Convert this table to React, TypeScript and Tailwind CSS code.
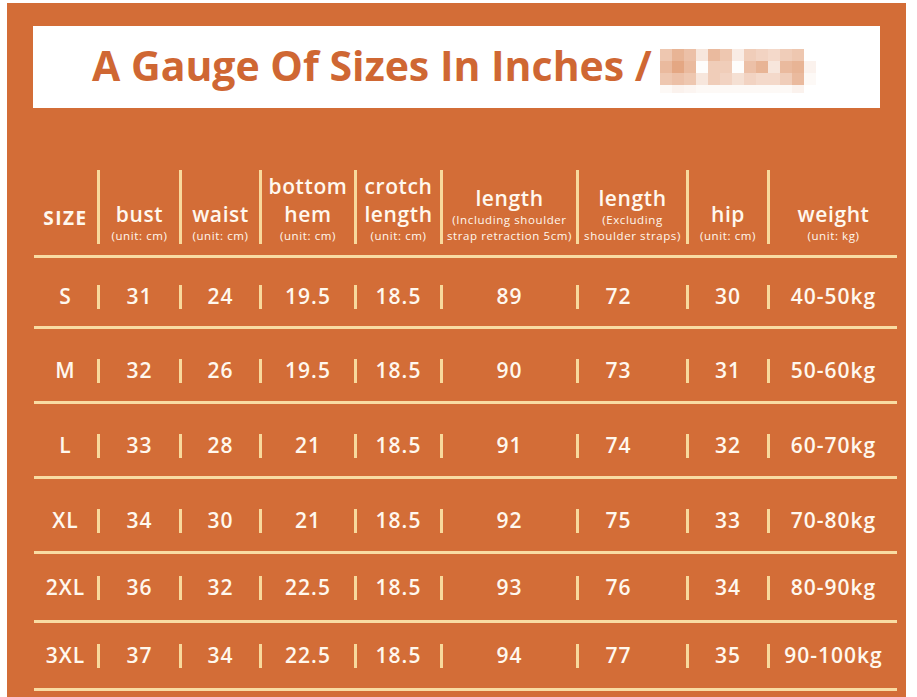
import React from 'react'

const cols = [
  { w: 'w-[63px]' },
  { w: 'w-[79px]' },
  { w: 'w-[77px]' },
  { w: 'w-[92px]' },
  { w: 'w-[83px]' },
  { w: 'w-[133px]' },
  { w: 'w-[107px]', data: 'pr-[28px]' },
  { w: 'w-[78px]' },
  { w: 'w-[127px]' },
]

const rows = [
  { cells: ['S', '31', '24', '19.5', '18.5', '89', '72', '30', '40-50kg'], h: 'h-[68px] pt-[10px]' },
  { cells: ['M', '32', '26', '19.5', '18.5', '90', '73', '31', '50-60kg'], h: 'h-[72px] pt-[12px]' },
  { cells: ['L', '33', '28', '21', '18.5', '91', '74', '32', '60-70kg'], h: 'h-[72px] pt-[12px]' },
  { cells: ['XL', '34', '30', '21', '18.5', '92', '75', '33', '70-80kg'], h: 'h-[72px] pt-[12px]' },
  { cells: ['2XL', '36', '32', '22.5', '18.5', '93', '76', '34', '80-90kg'], h: 'h-[66px] pt-[2px]' },
  { cells: ['3XL', '37', '34', '22.5', '18.5', '94', '77', '35', '90-100kg'], h: 'h-[65px]' },
]

// pixelated blur block after the title
const mosaic = [
  [0.45, 0.6, 0.5, 0.2, 0.55, 0.45, 0.15, 0.4, 0.35, 0.3, 0.4, 0.45, 0],
  [0.55, 0.7, 0.55, 0.02, 0.4, 0.4, 0.02, 0.5, 0.6, 0.2, 0.55, 0.6, 0.1],
  [0.45, 0.5, 0.45, 0.2, 0.4, 0.35, 0.25, 0.35, 0.3, 0.3, 0.4, 0.55, 0.05],
  [0.05, 0.1, 0.08, 0.05, 0.05, 0.05, 0.05, 0.05, 0.05, 0.05, 0.05, 0.1, 0],
]

function Divider({ tall }: { tall?: boolean }) {
  return <div className={`w-[3px] shrink-0 bg-[#f8d99c] ${tall ? 'self-stretch' : 'h-[24px]'}`} />
}

function Line() {
  return <div className="h-[3px] w-full bg-[#f9dca2]" />
}

function HeadCell({ w, main, sub }: { w: string; main: string[]; sub: string[] }) {
  return (
    <div className={`${w} shrink-0 flex flex-col items-center justify-end`}>
      {main.map((m) => (
        <div key={m} className="text-[21px] leading-[28px] font-semibold tracking-[0.6px]">{m}</div>
      ))}
      {sub.map((s) => (
        <div key={s} className="text-[11.5px] leading-[16px] tracking-[0.6px] whitespace-nowrap">{s}</div>
      ))}
    </div>
  )
}

export default function App() {
  return (
    <div className="w-[917px] h-[697px] bg-white pl-[7px] pt-[3px] overflow-hidden" style={{ fontFamily: '"Open Sans", "Noto Sans", sans-serif' }}>
      <div className="w-[899px] h-[694px] bg-[#d36d37] pt-[23px] text-[#fff8ee]">
        {/* Title */}
        <div className="ml-[26px] w-[847px] h-[82px] bg-white flex items-center pl-[59px]">
          <div className="text-[41px] font-bold text-[#cf6733] whitespace-nowrap leading-none -mt-[4px]">
            A Gauge Of Sizes In Inches /
          </div>
          <div className="ml-[8px] mt-[8px] grid grid-cols-[repeat(13,12px)]">
            {mosaic.flatMap((r, i) =>
              r.map((o, j) => (
                <div key={`${i}-${j}`} className={`${i === 3 ? 'h-[8px]' : 'h-[12px]'} bg-[#d9824f]`} style={{ opacity: o }} />
              ))
            )}
          </div>
        </div>

        {/* Table */}
        <div className="ml-[27px] w-[863px] mt-[62px]">
          <div className="flex h-[74px]">
            <div className={`${cols[0].w} shrink-0 flex items-end justify-center pb-[16px]`}>
              <span className="text-[19px] font-bold tracking-[1.5px] leading-none">SIZE</span>
            </div>
            <Divider tall />
            <HeadCell w={cols[1].w} main={['bust']} sub={['(unit: cm)']} />
            <Divider tall />
            <HeadCell w={cols[2].w} main={['waist']} sub={['(unit: cm)']} />
            <Divider tall />
            <HeadCell w={cols[3].w} main={['bottom', 'hem']} sub={['(unit: cm)']} />
            <Divider tall />
            <HeadCell w={cols[4].w} main={['crotch', 'length']} sub={['(unit: cm)']} />
            <Divider tall />
            <HeadCell w={cols[5].w} main={['length']} sub={['(Including shoulder', 'strap retraction 5cm)']} />
            <Divider tall />
            <HeadCell w={cols[6].w} main={['length']} sub={['(Excluding', 'shoulder straps)']} />
            <Divider tall />
            <HeadCell w={cols[7].w} main={['hip']} sub={['(unit: cm)']} />
            <Divider tall />
            <HeadCell w={cols[8].w} main={['weight']} sub={['(unit: kg)']} />
          </div>
          <div className="mt-[11px]">
            <Line />
          </div>
          {rows.map((r) => (
            <div key={r.cells[0]}>
              <div className={`flex items-center ${r.h}`}>
                {r.cells.map((c, i) => (
                  <React.Fragment key={i}>
                    {i > 0 && <Divider />}
                    <div className={`${cols[i].w} ${cols[i].data ?? ''} shrink-0 flex justify-center text-[21px] font-semibold tracking-[1px]`}>
                      {c}
                    </div>
                  </React.Fragment>
                ))}
              </div>
              <Line />
            </div>
          ))}
        </div>
      </div>
    </div>
  )
}
